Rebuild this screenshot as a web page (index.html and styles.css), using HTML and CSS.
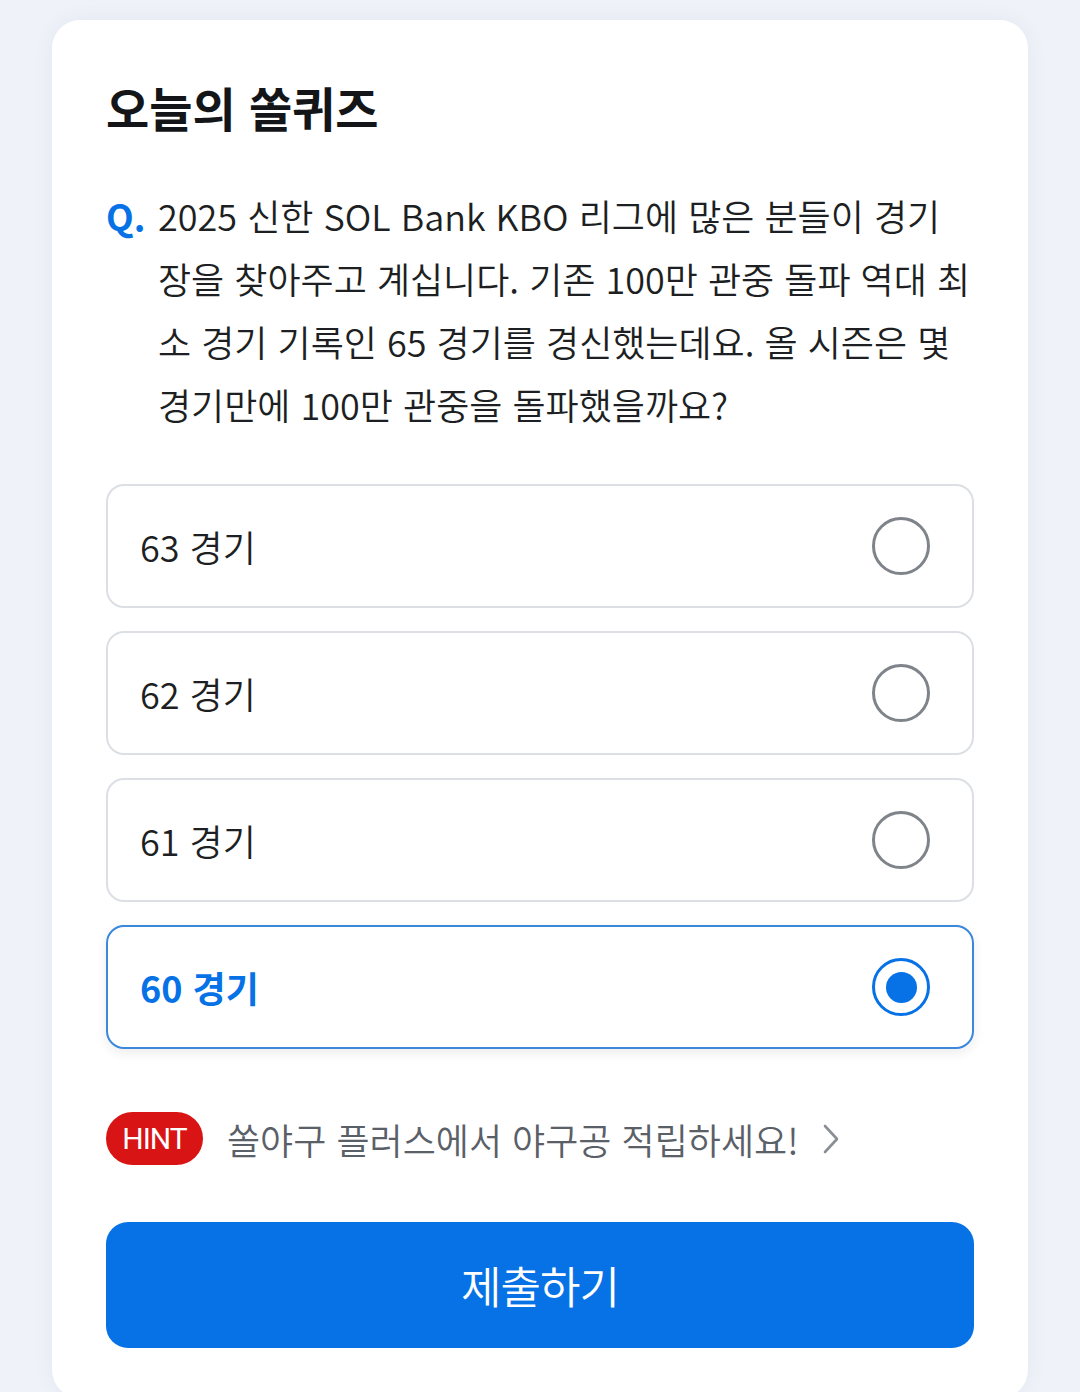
FILE: index.html
```html
<!DOCTYPE html>
<html lang="ko">
<head>
    <meta charset="UTF-8">
    <meta name="viewport" content="width=device-width, initial-scale=1.0">
    <title>오늘의 쏠퀴즈</title>
    <link rel="stylesheet" href="styles.css">
</head>
<body>
    <section class="quiz">
        <h1 class="quiz-title">오늘의 쏠퀴즈</h1>
        <div class="question">
            <span class="q-mark">Q.</span>
            <p class="q-text">2025 신한 SOL Bank KBO 리그에 많은 분들이 경기<br>장을 찾아주고 계십니다. 기존 100만 관중 돌파 역대 최<br>소 경기 기록인 65 경기를 경신했는데요. 올 시즌은 몇<br>경기만에 100만 관중을 돌파했을까요?</p>
        </div>
        <ul class="options">
            <li class="option"><span>63 경기</span><i class="radio"></i></li>
            <li class="option"><span>62 경기</span><i class="radio"></i></li>
            <li class="option"><span>61 경기</span><i class="radio"></i></li>
            <li class="option selected"><span>60 경기</span><i class="radio"></i></li>
        </ul>
        <div class="hint">
            <span class="hint-badge">HINT</span>
            <span class="hint-text">쏠야구 플러스에서 야구공 적립하세요!</span>
            <svg class="chevron" width="20" height="32" viewBox="0 0 20 32">
                <path d="M4 3 L16 16 L4 29" fill="none" stroke="#8a8f96" stroke-width="2.6" stroke-linecap="round" stroke-linejoin="round"/>
            </svg>
        </div>
        <button class="submit">제출하기</button>
    </section>
</body>
</html>
```

FILE: styles.css
```css
:root {
    --azul: #0672e6;
    --gris-borde: #dcdfe3;
    --fondo: #eff2f8;
}
body {
    font-family: "Noto Sans CJK KR", "Noto Sans", sans-serif;
    font-weight: 350;
    background-color: var(--fondo);
    color: #1d1f22;
    margin: 0;
    padding: 0;
}
.quiz {
    background: white;
    margin: 20px 52px 0;
    padding: 58px 54px 50px;
    border-radius: 28px;
    box-shadow: 0 0 18px rgba(120,140,190,0.10);
}
.quiz-title {
    font-size: 47px;
    line-height: 57px;
    font-weight: 700;
    color: #141518;
    margin: 0 0 49px;
}
.question {
    display: flex;
    font-size: 36px;
    line-height: 63px;
}
.q-mark {
    color: var(--azul);
    font-weight: 700;
    width: 52px;
    flex-shrink: 0;
}
.q-text {
    margin: 0;
    white-space: nowrap;
}
.options {
    list-style: none;
    margin: 48px 0 0;
    padding: 0;
    display: flex;
    flex-direction: column;
    gap: 23px;
}
.option {
    height: 124px;
    box-sizing: border-box;
    border: 2px solid var(--gris-borde);
    border-radius: 18px;
    padding: 0 42px 0 32px;
    display: flex;
    align-items: center;
    justify-content: space-between;
    font-size: 36px;
}
.radio {
    width: 58px;
    height: 58px;
    box-sizing: border-box;
    border: 3px solid #7f848a;
    border-radius: 50%;
    display: flex;
    align-items: center;
    justify-content: center;
}
.option.selected {
    border-color: #3a87dc;
    box-shadow: 0 4px 12px rgba(0,0,0,0.08);
    color: var(--azul);
    font-weight: 700;
}
.option.selected .radio {
    border-color: var(--azul);
}
.option.selected .radio::after {
    content: "";
    width: 31px;
    height: 31px;
    border-radius: 50%;
    background: var(--azul);
}
.hint {
    display: flex;
    align-items: center;
    margin-top: 63px;
}
.hint-badge {
    background: #d81414;
    color: white;
    height: 53px;
    width: 97px;
    border-radius: 27px;
    display: flex;
    align-items: center;
    justify-content: center;
    font-family: "Roboto", sans-serif;
    font-weight: 400;
    font-size: 30px;
    letter-spacing: -1px;
}
.hint-text {
    margin-left: 24px;
    font-size: 36px;
    color: #5a6068;
}
.chevron {
    margin-left: 22px;
}
.submit {
    display: block;
    width: 100%;
    height: 126px;
    margin-top: 57px;
    background-color: var(--azul);
    color: white;
    border: none;
    border-radius: 22px;
    font-family: inherit;
    font-weight: 350;
    font-size: 44px;
    letter-spacing: -1px;
    cursor: pointer;
}
```
